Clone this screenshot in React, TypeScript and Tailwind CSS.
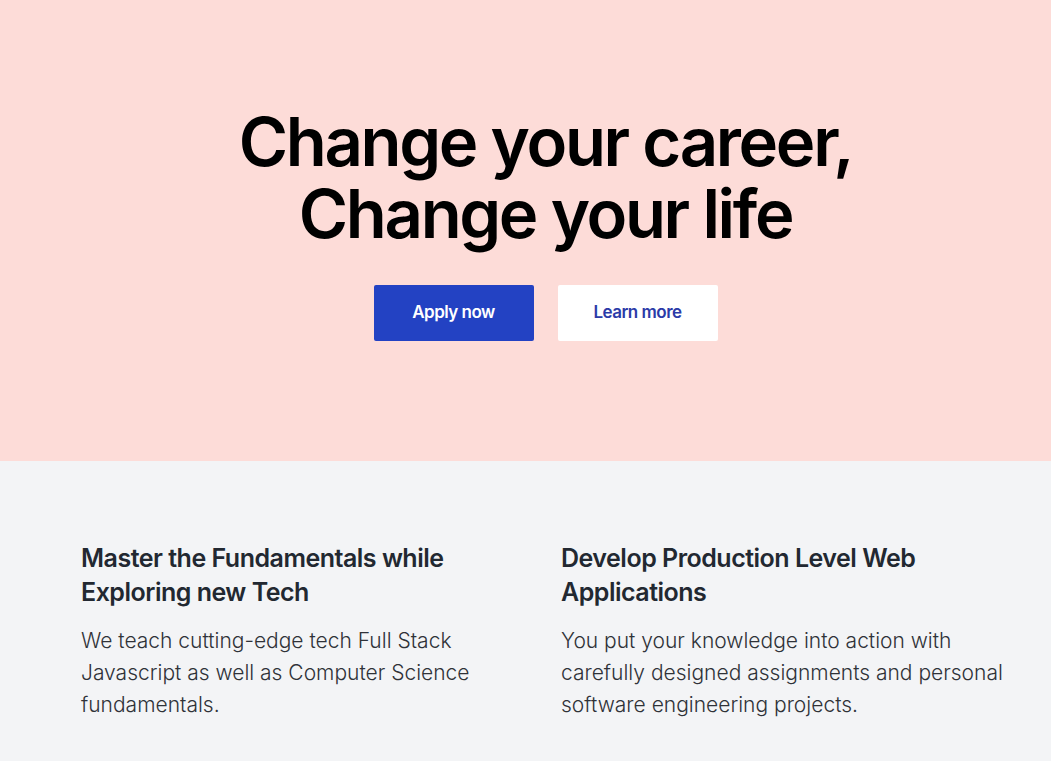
export default function App() {
  const features = [
    {
      title: "Master the Fundamentals while Exploring new Tech",
      body: "We teach cutting-edge tech Full Stack Javascript as well as Computer Science fundamentals.",
    },
    {
      title: "Develop Production Level Web Applications",
      body: "You put your knowledge into action with carefully designed assignments and personal software engineering projects.",
    },
  ];

  return (
    <div className="min-h-screen font-['Inter',sans-serif]">
      {/* Hero */}
      <section className="bg-[#fddcd8] h-[461px] flex flex-col items-center pt-[106px] pl-[40px]">
        <h1 className="text-center text-[67px] leading-[72px] font-semibold tracking-[-0.035em] text-black">
          Change your career,
          <br />
          Change your life
        </h1>
        <div className="flex gap-6 mt-[35px]">
          <a
            href="#"
            className="w-40 h-14 flex items-center justify-center rounded-[2px] bg-[#2342c3] text-white text-[17px] font-semibold tracking-[-0.03em]"
          >
            Apply now
          </a>
          <a
            href="#"
            className="w-40 h-14 flex items-center justify-center rounded-[2px] bg-white text-[#2b3ba8] text-[17px] font-semibold tracking-[-0.03em]"
          >
            Learn more
          </a>
        </div>
      </section>

      {/* Features */}
      <section className="bg-[#f3f4f6] h-[300px] pt-[80px] pl-[81px]">
        <div className="grid grid-cols-[480px_480px]">
          {features.map((f) => (
            <div key={f.title} className="max-w-[455px]">
              <h3 className="text-[25px] leading-[34px] font-semibold tracking-[-0.02em] text-[#222831]">
                {f.title}
              </h3>
              <p className="mt-[16px] text-[21px] leading-[32px] font-light text-[#2f3238]">
                {f.body}
              </p>
            </div>
          ))}
        </div>
      </section>
    </div>
  );
}
